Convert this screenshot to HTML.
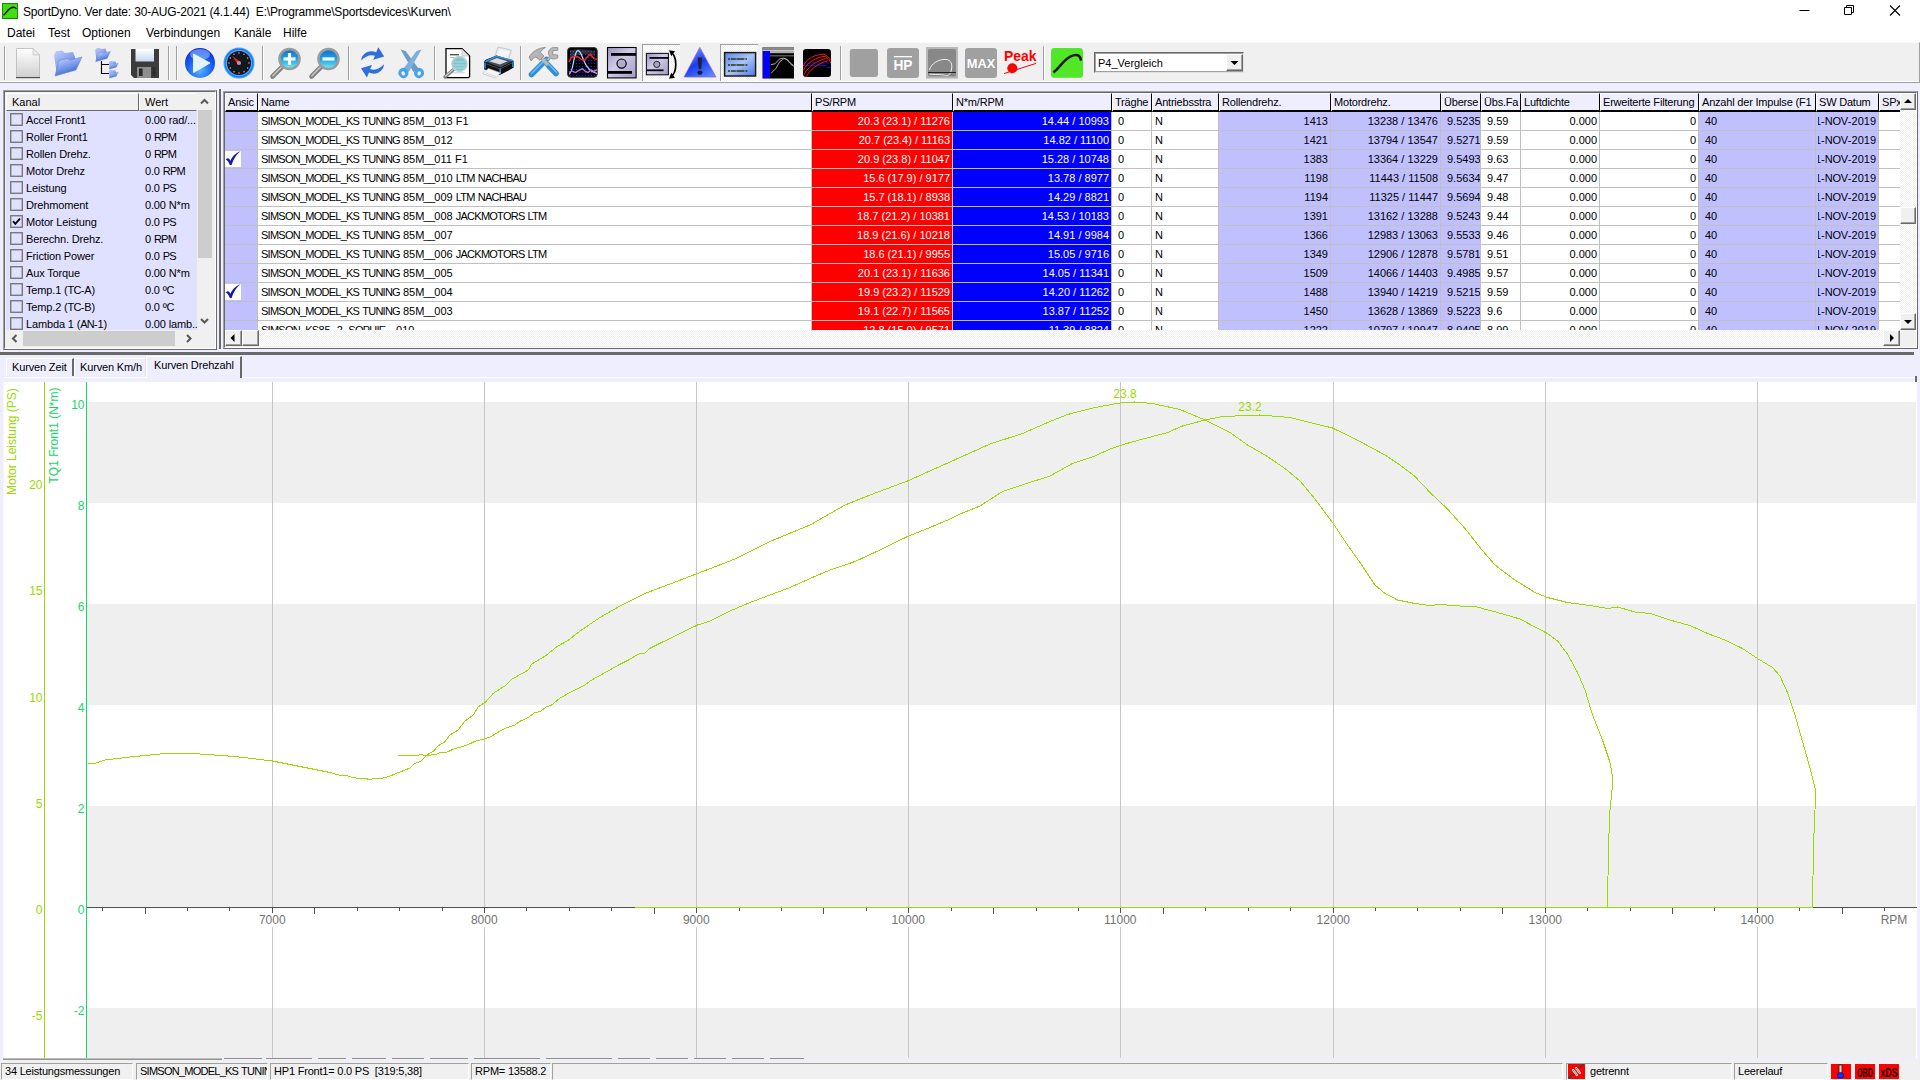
<!DOCTYPE html>
<html lang="de">
<head>
<meta charset="utf-8">
<title>SportDyno</title>
<style>.u{letter-spacing:-0.75px}

*{box-sizing:border-box;margin:0;padding:0}
html,body{width:1920px;height:1080px;overflow:hidden;background:#eeeeff;font-family:"Liberation Sans",sans-serif;font-size:11px;color:#000}
#title{position:absolute;left:0;top:0;width:1920px;height:22px;background:#fff}
#title .txt{position:absolute;left:23px;top:5px;font-size:12px;letter-spacing:-0.17px;white-space:pre;line-height:14px}
#menu{position:absolute;left:0;top:22px;width:1920px;height:20px;background:#fff;font-size:12px}
#menu span{position:absolute;top:4px;line-height:14px}
#toolbarbg{position:absolute;left:0;top:42px;width:1920px;height:41px;background:#f0f0f0;border-top:1px solid #fafafa;border-bottom:1px solid #a0a0a0;border-right:1px solid #a0a0a0;box-shadow:inset 0 -1px 0 #fff}
#vsplit{position:absolute;left:219px;top:89px;width:2px;height:260px;background:#696969}
#hsplit{position:absolute;left:0;top:352px;width:1914px;height:3px;background:#696969}
.tab{position:absolute;background:#eeeeff;border-left:1px solid #fff;border-top:1px solid #fff;border-right:2px solid #696969;white-space:nowrap;padding-left:5px;letter-spacing:-0.15px}
#tabline{position:absolute;left:4px;top:377px;width:1912px;height:1px;background:#fff}
#status{position:absolute;left:0;top:1060px;width:1920px;height:20px;background:#f0f0f0}
#status .p{position:absolute;top:3px;height:17px;border-top:1px solid #a0a0a0;border-left:1px solid #a0a0a0;border-right:1px solid #fff;border-bottom:1px solid #fff;line-height:15px;padding-left:3px;white-space:pre;overflow:hidden;letter-spacing:-0.2px}
#status .i{position:absolute;top:4px;height:15px;background:#f00}

#lp{position:absolute;left:3px;top:90px;width:214px;height:260px;border:1px solid #a0a0a0;border-right-color:#696969;border-bottom-color:#696969;background:#f0f0f0}
#lp .in{position:absolute;left:0;top:0;right:0;bottom:0;border:1px solid #696969;border-right-color:#fff;border-bottom-color:#fff}
#lp .body{position:absolute;left:1px;top:1px;width:207px;height:254px;overflow:hidden;background:#f0f0f0}
#lp .hd{position:absolute;top:0;height:18px;background:#f0f0f0;border-top:1px solid #fff;border-left:1px solid #fff;border-right:1px solid #696969;border-bottom:1px solid #696969;line-height:17px;padding-left:5px}
#lp .rows{position:absolute;left:0;top:18px;width:191px;height:219px;letter-spacing:-0.15px;background:#e0e0ff;overflow:hidden}
#lp .r{position:absolute;left:0;width:191px;height:17px;line-height:19px;white-space:nowrap}
#lp .cb{position:absolute;left:4px;top:2px;width:13px;height:13px;border:1px solid #7a7a7a;box-shadow:inset 0 0 0 .5px #8a8a8a}
#lp .n{position:absolute;left:20px;top:0}
#lp .v{position:absolute;left:139px;top:0}
#lp .vs{position:absolute;left:191px;top:0;width:15px;height:237px;background:#f0f0f0}
#lp .vs .th{position:absolute;left:1px;top:17px;width:14px;height:148px;background:#cdcdcd}
#lp .hs{position:absolute;left:0;top:237px;width:207px;height:17px;background:#f0f0f0}
#lp .hs .th{position:absolute;left:17px;top:1px;width:152px;height:15px;background:#cdcdcd}

.u2{letter-spacing:-0.25px}
#gr{position:absolute;left:223px;top:91px;width:1695px;height:258px;border:1px solid #a0a0a0;border-right-color:#696969;border-bottom-color:#696969;background:#f0f0f0}
#gr .in{position:absolute;left:0;top:0;right:0;bottom:0;border:1px solid #696969;border-right-color:#fff;border-bottom-color:#fff}
#gv{position:absolute;left:225px;top:93px;width:1675px;height:237px;overflow:hidden;background:#fff}
#gv .h{position:absolute;top:0;height:19px;background:#eeeeff;border-left:1px solid #fff;border-top:1px solid #fff;border-right:1px solid #000;border-bottom:2px solid #000;line-height:16px;padding-left:2px;white-space:nowrap;overflow:hidden;letter-spacing:-0.2px}
#gv .c{position:absolute;height:19px;border-right:1px solid #c0c0c0;border-bottom:1px solid #c0c0c0;line-height:18px;white-space:nowrap;overflow:hidden}
#gv .c.l{padding-left:3px}
#gv .c.r{text-align:right;padding-right:2px}
#gv .c .cl{position:absolute;left:2px;right:2px;top:0;bottom:0;overflow:hidden}
#gv .c span.d{position:absolute;right:0;top:0}
.ck{position:absolute;left:0;top:1px;width:16px;height:16px;background:#fff}

#gvs{position:absolute;left:1900px;top:93px;width:16px;height:237px;background:#f7f7f7;background-image:conic-gradient(#fff 25%,#f0f0f0 0 50%,#fff 0 75%,#f0f0f0 0);background-size:2px 2px}
#gvs .b,#ghs .b{position:absolute;background:#f0f0f0;border:1px solid #fff;border-right-color:#696969;border-bottom-color:#696969;box-shadow:inset -1px -1px 0 #a0a0a0}
#gvs .b{left:0;width:16px;height:17px}
#ghs{position:absolute;left:225px;top:330px;width:1675px;height:16px;background:#f7f7f7;background-image:conic-gradient(#fff 25%,#f0f0f0 0 50%,#fff 0 75%,#f0f0f0 0);background-size:2px 2px}
#ghs .b{top:0;width:17px;height:16px}
#ghs svg,#gvs svg{position:absolute;left:-1px;top:-1px}

#chart{position:absolute;left:0;top:0;width:1920px;height:1080px;pointer-events:none}
#chart text{font-family:"Liberation Sans",sans-serif;font-size:12px}

#tb{position:absolute;left:0;top:42px;width:1920px;height:41px}
#tb text{font-family:"Liberation Sans",sans-serif}
#combo{position:absolute;left:1094px;top:52px;width:150px;height:21px;border:1px solid #696969;border-right-color:#e3e3e3;border-bottom-color:#e3e3e3;background:#fff;box-shadow:0 0 0 1px #a0a0a0 inset}
#combo .t{position:absolute;left:3px;top:3px;font-size:11px;line-height:15px;white-space:nowrap}
#combo .b{position:absolute;left:131px;top:1px;width:17px;height:17px;background:#f0f0f0;border:1px solid #fff;border-right-color:#696969;border-bottom-color:#696969;box-shadow:inset -1px -1px 0 #a0a0a0}
.pressed{position:absolute;top:44px;height:37px;border-top:1px solid #a0a0a0;border-left:1px solid #a0a0a0;background-color:#f8f8f8;background-image:conic-gradient(#fff 25%,#f0f0f0 0 50%,#fff 0 75%,#f0f0f0 0);background-size:2px 2px}
</style>
</head>
<body>
<div id="title"><svg width="16" height="16" style="position:absolute;left:2px;top:3px" viewBox="0 0 16 15" preserveAspectRatio="none"><rect x="0.5" y="0.5" width="15" height="14" fill="#3ee010" stroke="#1a8a00"/><path d="M1.5 11.5 C5 9 6 4.5 11 4 C13 3.8 13.5 4.5 14.5 5.5" fill="none" stroke="#000" stroke-width="1.3"/></svg><span class="txt">SportDyno. Ver date: 30-AUG-2021 (4.1.44)  E:\Programme\Sportsdevices\Kurven\</span>
<svg width="140" height="22" style="position:absolute;left:1780px;top:0" viewBox="0 0 140 22"><path d="M19.5 10.5 H29.5" stroke="#000" stroke-width="1" fill="none"/><path d="M64.5 7.5 H71.5 V14.5 H64.5 Z M66.5 7.5 V5.5 H73.5 V12.5 H71.5" stroke="#000" stroke-width="1" fill="none"/><path d="M110 5.5 L120 15.5 M120 5.5 L110 15.5" stroke="#000" stroke-width="1.1" fill="none"/></svg>
</div>
<div id="menu"><span style="left:7px">Datei</span><span style="left:48px">Test</span><span style="left:82px">Optionen</span><span style="left:146px">Verbindungen</span><span style="left:234px">Kanäle</span><span style="left:283px">Hilfe</span></div>
<div id="toolbarbg"></div>
<div class="pressed" style="left:642px;width:38px"></div><div class="pressed" style="left:720px;width:38px"></div>
<svg id="tb" width="1920" height="41" viewBox="0 42 1920 41">
<defs>
<linearGradient id="gDoc" x1="0" y1="0" x2="0" y2="1"><stop offset="0" stop-color="#ffffff"/><stop offset="1" stop-color="#cfcfcf"/></linearGradient>
<linearGradient id="gFb" x1="0" y1="0" x2="0.6" y2="1"><stop offset="0" stop-color="#c2d2f8"/><stop offset="0.5" stop-color="#8ea8ec"/><stop offset="1" stop-color="#4a6cd6"/></linearGradient>
<linearGradient id="gFf" x1="0.2" y1="0" x2="0.7" y2="1"><stop offset="0" stop-color="#c6d6fa"/><stop offset="0.45" stop-color="#7f9fec"/><stop offset="1" stop-color="#2f55c8"/></linearGradient>
<radialGradient id="gPlay" cx="0.5" cy="0.75" r="0.75"><stop offset="0" stop-color="#56b4ff"/><stop offset="0.55" stop-color="#1a62f0"/><stop offset="1" stop-color="#0a2ad8"/></radialGradient>
<linearGradient id="gLens" x1="0" y1="0" x2="0" y2="1"><stop offset="0" stop-color="#0a6fd0"/><stop offset="0.55" stop-color="#1ea8e8"/><stop offset="1" stop-color="#7ff0f4"/></linearGradient>
<linearGradient id="gRoll" x1="0" y1="0" x2="1" y2="1"><stop offset="0" stop-color="#9a94c0"/><stop offset="0.45" stop-color="#d0cce8"/><stop offset="1" stop-color="#a09ac4"/></linearGradient>
<linearGradient id="gWarn" x1="0.2" y1="0" x2="0.8" y2="1"><stop offset="0" stop-color="#86a0ff"/><stop offset="0.5" stop-color="#1a3cf0"/><stop offset="1" stop-color="#5a86ff"/></linearGradient>
<linearGradient id="gPanel" x1="0" y1="0" x2="1" y2="1"><stop offset="0" stop-color="#5a8ae8"/><stop offset="0.5" stop-color="#a8c4f8"/><stop offset="1" stop-color="#4a7ae0"/></linearGradient>
<linearGradient id="gFl" x1="0" y1="0" x2="0" y2="1"><stop offset="0" stop-color="#ffffff"/><stop offset="1" stop-color="#c4d8ee"/></linearGradient>
<pattern id="pDots" width="3" height="3" patternUnits="userSpaceOnUse"><rect width="1" height="1" fill="#1a1aff"/></pattern>
</defs>
<rect x="4" y="46" width="1" height="34" fill="#a0a0a0"/><rect x="5" y="46" width="1" height="34" fill="#fff"/><rect x="168" y="46" width="1" height="34" fill="#a0a0a0"/><rect x="169" y="46" width="1" height="34" fill="#fff"/><rect x="176" y="46" width="1" height="34" fill="#a0a0a0"/><rect x="177" y="46" width="1" height="34" fill="#fff"/><rect x="262" y="46" width="1" height="34" fill="#a0a0a0"/><rect x="263" y="46" width="1" height="34" fill="#fff"/><rect x="348" y="46" width="1" height="34" fill="#a0a0a0"/><rect x="349" y="46" width="1" height="34" fill="#fff"/><rect x="434" y="46" width="1" height="34" fill="#a0a0a0"/><rect x="435" y="46" width="1" height="34" fill="#fff"/><rect x="520" y="46" width="1" height="34" fill="#a0a0a0"/><rect x="521" y="46" width="1" height="34" fill="#fff"/><rect x="840" y="46" width="1" height="34" fill="#a0a0a0"/><rect x="841" y="46" width="1" height="34" fill="#fff"/><rect x="1043" y="46" width="1" height="34" fill="#a0a0a0"/><rect x="1044" y="46" width="1" height="34" fill="#fff"/>
<path d="M16.5 48.5 H33 L39.5 55 V77.5 H16.5 Z" fill="url(#gDoc)" stroke="#b8b8b8" stroke-width="0.8"/><path d="M33 48.5 V55 H39.5 Z" fill="#ececec" stroke="#c0c0c0" stroke-width="0.7"/><rect x="16" y="77" width="24" height="1.2" fill="#505050"/>
<polygon points="54.0,55.0 56.0,51.2 62.0,50.5 65.0,53.0 73.0,52.0 75.0,57.0 75.0,60.0 57.0,75.0" fill="url(#gFb)"/><polygon points="55.0,76.0 59.0,60.5 67.0,58.5 70.0,60.0 82.0,57.0 76.0,70.0 55.0,76.0" fill="url(#gFf)" stroke="#5a7ad8" stroke-width="0.50"/>
<polygon points="95.0,50.2 96.2,48.2 99.5,47.8 101.1,49.1 105.5,48.6 106.6,51.4 106.6,53.0 96.7,61.2" fill="url(#gFb)"/><polygon points="95.6,61.8 97.8,53.3 102.2,52.2 103.8,53.0 110.5,51.4 107.2,58.5 95.6,61.8" fill="url(#gFf)" stroke="#5a7ad8" stroke-width="0.28"/>
<polygon points="108.8,62.2 109.5,60.9 111.6,60.7 112.6,61.5 115.3,61.2 116.0,62.9 116.0,63.9 109.9,69.0" fill="url(#gFb)"/><polygon points="109.2,69.3 110.5,64.1 113.3,63.4 114.3,63.9 118.4,62.9 116.3,67.3 109.2,69.3" fill="url(#gFf)" stroke="#5a7ad8" stroke-width="0.17"/>
<polygon points="108.8,71.2 109.5,69.9 111.6,69.7 112.6,70.5 115.3,70.2 116.0,71.9 116.0,72.9 109.9,78.0" fill="url(#gFb)"/><polygon points="109.2,78.3 110.5,73.1 113.3,72.4 114.3,72.9 118.4,71.9 116.3,76.3 109.2,78.3" fill="url(#gFf)" stroke="#5a7ad8" stroke-width="0.17"/>
<path d="M101.5 61 V73.5 H109 M101.5 64.5 H109" fill="none" stroke="#000" stroke-width="1.1"/>
<path d="M131 49 H159 V78 H134 L131 75 Z" fill="#3c3c3c"/><rect x="135.5" y="49" width="18.5" height="12.5" fill="url(#gFl)"/><rect x="137" y="67" width="14" height="11" fill="#8e8e8e"/><rect x="139" y="68.5" width="3.6" height="7.5" fill="#2a2a2a"/><rect x="152.5" y="67" width="3" height="9" fill="#2c2c2c"/>
<circle cx="200" cy="63" r="15" fill="url(#gPlay)"/><ellipse cx="200" cy="54.5" rx="10" ry="5.5" fill="#9cc8ff" opacity=".55"/><path d="M193.5 54 L210 63 L193.5 72.5 Z" fill="#e4f2ff" stroke="#fff" stroke-width=".8" stroke-linejoin="round"/>
<circle cx="239" cy="63" r="15.5" fill="#48a8ff"/><circle cx="239" cy="63" r="13.8" fill="none" stroke="#1a7af0" stroke-width="1.2"/><circle cx="239" cy="63" r="12" fill="#16161f"/>
<circle cx="249.0" cy="63.0" r=".7" fill="#c8c8d0"/>
<circle cx="247.7" cy="68.0" r=".7" fill="#c8c8d0"/>
<circle cx="244.0" cy="71.7" r=".7" fill="#c8c8d0"/>
<circle cx="239.0" cy="73.0" r=".7" fill="#c8c8d0"/>
<circle cx="234.0" cy="71.7" r=".7" fill="#c8c8d0"/>
<circle cx="230.3" cy="68.0" r=".7" fill="#c8c8d0"/>
<circle cx="229.0" cy="63.0" r=".7" fill="#c8c8d0"/>
<circle cx="230.3" cy="58.0" r=".7" fill="#c8c8d0"/>
<circle cx="234.0" cy="54.3" r=".7" fill="#c8c8d0"/>
<circle cx="239.0" cy="53.0" r=".7" fill="#c8c8d0"/>
<circle cx="244.0" cy="54.3" r=".7" fill="#c8c8d0"/>
<circle cx="247.7" cy="58.0" r=".7" fill="#c8c8d0"/>
<path d="M232 55.8 L240.2 61.8 L237.8 64.2 Z" fill="#ff2020"/><circle cx="239" cy="63" r="2.1" fill="#a0a0a8"/>
<path d="M282.0 67 L272.5 76.5" stroke="#808080" stroke-width="4.6" stroke-linecap="round"/><path d="M281.5 67 L272.9 75.8" stroke="#c4c4c4" stroke-width="1.6" stroke-linecap="round"/>
<circle cx="289.5" cy="59" r="10" fill="url(#gLens)" stroke="#9c9c9c" stroke-width="2.6"/>
<rect x="283.5" y="57.4" width="12" height="3.2" fill="#fff"/>
<rect x="287.9" y="53" width="3.2" height="12" fill="#fff"/>
<path d="M321.0 67 L311.5 76.5" stroke="#808080" stroke-width="4.6" stroke-linecap="round"/><path d="M320.5 67 L311.9 75.8" stroke="#c4c4c4" stroke-width="1.6" stroke-linecap="round"/>
<circle cx="328.5" cy="59" r="10" fill="url(#gLens)" stroke="#9c9c9c" stroke-width="2.6"/>
<rect x="322.5" y="57.4" width="12" height="3.2" fill="#fff"/>
<path d="M361.2 60.5 C361.5 53.5 369 49 376.2 52.2 L378.3 47.2 L384.2 56.6 L373.2 59.8 L375 55.8 C370.5 54 365.5 56 361.2 60.5 Z" fill="#2f6de0"/><path d="M361.2 60.5 C361.5 53.5 369 49 376.2 52.2 L378.3 47.2 L384.2 56.6 L373.2 59.8 L375 55.8 C370.5 54 365.5 56 361.2 60.5 Z" fill="#2f6de0" transform="rotate(180 372.6 62.4)"/>
<path d="M400.6 49.6 L405.6 51 L418.6 68.6 L413.4 72 L409 64 Z" fill="#6c9ccc"/><path d="M421.6 49.6 L416.6 51 L403.6 68.6 L408.8 72 L413.2 64 Z" fill="#7eaedc"/>
<ellipse cx="403.4" cy="73" rx="5" ry="5.2" fill="#4aa2ea" transform="rotate(-28 403.4 73)"/><ellipse cx="403.2" cy="73.4" rx="1.7" ry="2.2" fill="#f0f0f0" transform="rotate(-28 403.2 73.4)"/><ellipse cx="419" cy="73" rx="5" ry="5.2" fill="#4aa2ea" transform="rotate(28 419 73)"/><ellipse cx="419.2" cy="73.4" rx="1.7" ry="2.2" fill="#f0f0f0" transform="rotate(28 419.2 73.4)"/>
<path d="M446 48.6 H462 L469.6 56 V76.5 L468.5 77.6 H446 Z" fill="#fff" stroke="#000" stroke-width="1.3"/><path d="M462 49 V56 H469" fill="#e6e6e6" stroke="#b0b0b0" stroke-width=".6"/><rect x="450" y="54" width="9" height="1.4" fill="#505050"/><rect x="450" y="57" width="9" height=".8" fill="#b0b0b0"/><rect x="452" y="72.5" width="13" height=".8" fill="#c0c0c0"/>
<path d="M453.5 69.5 L445 77" stroke="#7c7c7c" stroke-width="3.4" stroke-linecap="round"/><path d="M453 69.6 L445.6 76" stroke="#d0d0d0" stroke-width="1.2" stroke-linecap="round"/><circle cx="459.5" cy="64" r="7.4" fill="#7cc6cc" stroke="#c0ccd4" stroke-width="1.8"/><path d="M453.5 62 H465.5 M453 65 H466 M454 68 H465" stroke="#a8dce0" stroke-width="1" fill="none"/>
<polygon points="498,47 511.4,50 508,61.6 494,58.4" fill="#e6e8ec" stroke="#aab2ba" stroke-width=".6"/><polygon points="499.4,49 509.6,51.4 507,60 496.4,57.4" fill="#f6f7f9"/>
<path d="M484 62.4 C484 60.6 485 60 487 59.2 L496.4 55.4 L512 60 C513.4 60.6 513.8 61.2 513.8 62.4 L513.8 67.6 L500 75 L484 69.2 Z" fill="#101012"/>
<polygon points="485,61.6 496.6,56.6 512.6,61 500.4,67.6" fill="#4a4c52"/><polygon points="489,61.2 496.8,58 507.6,61.2 500,64.6" fill="#d8dade"/>
<path d="M484.4 62 L496.6 56.2 L513.2 60.8" fill="none" stroke="#2c92f2" stroke-width="1.5"/><path d="M485 63 V68.6 M500.2 68.6 V74.4 M513 62 V67" stroke="#2c92f2" stroke-width="1.5" fill="none"/><path d="M485 63.4 L500.2 69 L513 62.2" fill="none" stroke="#6a6c72" stroke-width=".7"/>
<polygon points="488.4,68.4 500.4,72.8 495.4,78 482.6,73.6" fill="#f6f6f6" stroke="#b4b4b4" stroke-width=".6"/><path d="M486 73 L496 76.4" stroke="#d0d0d0" stroke-width=".8"/>
<path d="M531.5 74.5 L546.5 59.5" stroke="#2f8ed8" stroke-width="5.6" stroke-linecap="round"/><path d="M531.5 73.5 L546 59" stroke="#6cbcf4" stroke-width="1.6" stroke-linecap="round"/>
<path d="M556 73.5 L548 65" stroke="#2f8ed8" stroke-width="5.6" stroke-linecap="round"/><path d="M556.6 72.4 L549 64.4" stroke="#6cbcf4" stroke-width="1.5" stroke-linecap="round"/><path d="M548 65 L541 57.5" stroke="#b8b8b8" stroke-width="3.4"/>
<path d="M529.2 57 C532 52 537 48 545.5 47.4 C543 49 541 50.5 540.4 52.4 L544 56 L540 60.4 L536 57 C534 57.6 532 59.4 531 61 Z" fill="#b4b4b4" stroke="#7c7c7c" stroke-width=".7"/>
<path d="M546.5 59.5 L549.5 56.2 C547 52.4 549 48.4 553.4 47.4 L557.8 47.6 L557.8 50.4 L553 50.6 L552.6 54.6 L557.8 55 L557.8 57.8 C555 59.4 552.4 59.4 550.6 58 L548.4 61 Z" fill="#b8b8b8" stroke="#808080" stroke-width=".7"/>
<rect x="567.6" y="47.6" width="29.6" height="29.6" rx="3.2" fill="#000" stroke="#3a3a3a" stroke-width="1"/><rect x="569" y="49" width="27" height="27" fill="url(#pDots)"/><path d="M570 50 Q582 48 595 51 L595 56 Q582 52 570 58 Z" fill="#fff" opacity=".18"/>
<path d="M569 74 C573.5 74 573.5 50.5 578 50.5 C582.6 50.5 583 71 597 73.4" fill="none" stroke="#a6d4ff" stroke-width="1.3"/><path d="M569 62 L571 57.6 L574 56.4 L578 57 L581 59.4 L584.5 60.2 L588 56.2 L590.4 54.6 L594 58.6 L597 59.4" fill="none" stroke="#ff2020" stroke-width="1.5"/><path d="M569 72.4 L572 71 L575.5 72.6 L579 70.4 L582.4 68.6 L585.4 71.4 L588 72.4 L591 70 L594 71.4 L597 69.6" fill="none" stroke="#d070e0" stroke-width="1.3"/>
<rect x="607.5" y="47.5" width="28.6" height="30.4" fill="url(#gRoll)" stroke="#000" stroke-width="1.1"/><rect x="611" y="53" width="25" height="2.8" fill="#000"/><rect x="607.5" y="71" width="24.5" height="2.8" fill="#000"/><circle cx="621.6" cy="63.6" r="4.6" fill="#b4aecc" stroke="#000" stroke-width="1.2"/>
<rect x="646.4" y="53.4" width="22" height="21.4" fill="url(#gRoll)" stroke="#16161e" stroke-width="1.1"/><rect x="649.5" y="57" width="19" height="1.8" fill="#000"/><rect x="646.5" y="69.4" width="17" height="1.8" fill="#000"/><circle cx="656.8" cy="64.4" r="3.1" fill="#aaa4c4" stroke="#26262e" stroke-width="1"/>
<path d="M671 52.4 C677.4 56 677.4 72.6 671 76.6" fill="none" stroke="#000" stroke-width="1.7"/><path d="M669 50.2 L675 51.2 L671.2 56.2 Z M669 78.8 L675 77.8 L671.2 72.8 Z" fill="#000"/>
<path d="M699.8 47.4 L716 77 H684 Z" fill="url(#gWarn)" stroke="#8868e0" stroke-width=".8" stroke-linejoin="round"/><path d="M697.6 57.4 H702.2 L701.2 69 H698.6 Z" fill="#20203c"/><ellipse cx="699.9" cy="72.6" rx="2.6" ry="2.2" fill="#1a1a38"/>
<rect x="724.6" y="52.6" width="31" height="23.4" fill="url(#gPanel)" stroke="#1c1c12" stroke-width="1.5"/><path d="M728 59 H747 M728 65 H748 M728 71 H748" stroke="#33331c" stroke-width="1.5" stroke-dasharray="2 .8 5 .6 8 1" fill="none"/>
<rect x="762.5" y="47.5" width="31.5" height="31" fill="#000"/><rect x="762.5" y="47.5" width="31.5" height="2" fill="#8c8c8c"/><rect x="762.5" y="49.5" width="31.5" height="1.6" fill="#c8c8c8"/><rect x="770" y="51" width="24" height="2.2" fill="#b0b0b0"/><rect x="770" y="55.4" width="24" height=".9" fill="#8c8c8c"/><rect x="763" y="51" width="7" height="27" fill="#0000ff"/>
<path d="M771 64.6 L775 63.8 L779.4 59 L783.4 58 L786.4 59 L790 63.4 L793.6 66.6 M771 73.4 L775.6 68.8 L780 61.4 L784 58.6 L787.4 59.6 L790.4 63 L793.6 65.6" fill="none" stroke="#b8b8b8" stroke-width=".9"/>
<rect x="803" y="49" width="28" height="28" rx="3.2" fill="#000"/><path d="M803 63 H831" stroke="#1414ff" stroke-width=".9" stroke-dasharray="3 1.5" fill="none"/><path d="M803.4 65.6 H826 M827 67.4 H831" stroke="#1414ff" stroke-width=".9" fill="none"/>
<path d="M803.4 66 C806 58.6 815 54.4 824 54.2 C827 55.4 829 58 830.8 60.4 M803.4 70.4 C807 62.6 816 57.4 825 56.2 C828 58 829.6 60.4 830.8 63 M804 74.6 C808 66.6 817 60.4 826.4 58.4 M806 77 C810 69.4 818 63.4 828 60.6" fill="none" stroke="#ff1414" stroke-width="1"/>
<rect x="849.8" y="49" width="28.2" height="28" rx="2.4" fill="#a0a0a0"/>
<rect x="887" y="48" width="32" height="30" rx="3" fill="#a0a0a0"/><text x="903" y="70" text-anchor="middle" font-size="14" font-weight="bold" fill="#fff" textLength="19" lengthAdjust="spacingAndGlyphs">HP</text><rect x="894" y="56" width="18" height="1.3" fill="#fff"/>
<rect x="926" y="47" width="32" height="31.6" fill="#b8b8b8"/><rect x="928" y="49" width="28" height="27.6" rx="1.5" fill="#888"/><path d="M929.4 70 C931 64 938 59 946 59.4 C951 60 952.6 64 951.4 70 C950.6 74 948.6 76 945.6 75.6 C943 74.4 938 74.6 929.6 74.2" fill="none" stroke="#f0f0f0" stroke-width="1"/><rect x="928" y="72" width="28" height="1" fill="#202020"/>
<rect x="965" y="48" width="32" height="30" rx="3" fill="#a0a0a0"/><text x="981" y="68.4" text-anchor="middle" font-size="13.5" font-weight="bold" fill="#fff" textLength="28.5" lengthAdjust="spacingAndGlyphs">MAX</text>
<text x="1004" y="60.6" font-size="14" font-weight="bold" fill="#ff0000" textLength="32.4" lengthAdjust="spacingAndGlyphs">Peak</text><path d="M1004 73.6 L1036 63.4" stroke="#ff0000" stroke-width="1" fill="none"/><circle cx="1012.3" cy="68.2" r="5" fill="#ff0000"/>
<rect x="1051" y="48" width="32" height="29.8" rx="3.4" fill="#52e628"/><path d="M1053.4 72.4 C1060 68 1064 58 1073 55.4 C1078 54 1080.4 55.6 1081 60.6" fill="none" stroke="#1a1a1a" stroke-width="2.5"/>
</svg>
<div id="combo"><span class="t">P4_Vergleich</span><div class="b"><svg width="15" height="15" style="position:absolute;left:0;top:0"><path d="M3.5 6 L11.5 6 L7.5 10 Z" fill="#000"/></svg></div></div>
<svg id="chart" width="1920" height="1080" viewBox="0 0 1920 1080">
<rect x="3" y="382" width="1" height="676" fill="#f6f6ff"/>
<rect x="4" y="382" width="1913" height="676" fill="#fff"/>
<rect x="87" y="402" width="1829" height="101" fill="#efefef"/>
<rect x="87" y="604" width="1829" height="101" fill="#efefef"/>
<rect x="87" y="806" width="1829" height="101" fill="#efefef"/>
<rect x="87" y="1008" width="1829" height="50" fill="#efefef"/>
<rect x="272" y="382" width="1" height="676" fill="#c6c6c6"/>
<rect x="256" y="913" width="33" height="14" fill="#fff"/>
<rect x="484" y="382" width="1" height="676" fill="#c6c6c6"/>
<rect x="468" y="913" width="33" height="14" fill="#fff"/>
<rect x="696" y="382" width="1" height="676" fill="#c6c6c6"/>
<rect x="680" y="913" width="33" height="14" fill="#fff"/>
<rect x="908" y="382" width="1" height="676" fill="#c6c6c6"/>
<rect x="892" y="913" width="33" height="14" fill="#fff"/>
<rect x="1120" y="382" width="1" height="676" fill="#c6c6c6"/>
<rect x="1104" y="913" width="33" height="14" fill="#fff"/>
<rect x="1333" y="382" width="1" height="676" fill="#c6c6c6"/>
<rect x="1317" y="913" width="33" height="14" fill="#fff"/>
<rect x="1545" y="382" width="1" height="676" fill="#c6c6c6"/>
<rect x="1529" y="913" width="33" height="14" fill="#fff"/>
<rect x="1757" y="382" width="1" height="676" fill="#c6c6c6"/>
<rect x="1741" y="913" width="33" height="14" fill="#fff"/>
<rect x="87" y="907" width="1830" height="1" fill="#505050"/>
<rect x="102" y="908" width="1" height="3" fill="#505050"/>
<rect x="145" y="908" width="1" height="6" fill="#505050"/>
<rect x="187" y="908" width="1" height="3" fill="#505050"/>
<rect x="229" y="908" width="1" height="3" fill="#505050"/>
<rect x="272" y="908" width="1" height="5" fill="#505050"/>
<rect x="314" y="908" width="1" height="6" fill="#505050"/>
<rect x="357" y="908" width="1" height="3" fill="#505050"/>
<rect x="399" y="908" width="1" height="3" fill="#505050"/>
<rect x="442" y="908" width="1" height="3" fill="#505050"/>
<rect x="484" y="908" width="1" height="5" fill="#505050"/>
<rect x="526" y="908" width="1" height="3" fill="#505050"/>
<rect x="569" y="908" width="1" height="3" fill="#505050"/>
<rect x="611" y="908" width="1" height="3" fill="#505050"/>
<rect x="654" y="908" width="1" height="6" fill="#505050"/>
<rect x="696" y="908" width="1" height="5" fill="#505050"/>
<rect x="739" y="908" width="1" height="3" fill="#505050"/>
<rect x="781" y="908" width="1" height="3" fill="#505050"/>
<rect x="823" y="908" width="1" height="6" fill="#505050"/>
<rect x="866" y="908" width="1" height="3" fill="#505050"/>
<rect x="908" y="908" width="1" height="5" fill="#505050"/>
<rect x="951" y="908" width="1" height="3" fill="#505050"/>
<rect x="993" y="908" width="1" height="6" fill="#505050"/>
<rect x="1036" y="908" width="1" height="3" fill="#505050"/>
<rect x="1078" y="908" width="1" height="3" fill="#505050"/>
<rect x="1120" y="908" width="1" height="5" fill="#505050"/>
<rect x="1163" y="908" width="1" height="6" fill="#505050"/>
<rect x="1205" y="908" width="1" height="3" fill="#505050"/>
<rect x="1248" y="908" width="1" height="3" fill="#505050"/>
<rect x="1290" y="908" width="1" height="3" fill="#505050"/>
<rect x="1333" y="908" width="1" height="5" fill="#505050"/>
<rect x="1375" y="908" width="1" height="3" fill="#505050"/>
<rect x="1417" y="908" width="1" height="3" fill="#505050"/>
<rect x="1460" y="908" width="1" height="3" fill="#505050"/>
<rect x="1502" y="908" width="1" height="6" fill="#505050"/>
<rect x="1545" y="908" width="1" height="5" fill="#505050"/>
<rect x="1587" y="908" width="1" height="3" fill="#505050"/>
<rect x="1630" y="908" width="1" height="3" fill="#505050"/>
<rect x="1672" y="908" width="1" height="6" fill="#505050"/>
<rect x="1714" y="908" width="1" height="3" fill="#505050"/>
<rect x="1757" y="908" width="1" height="5" fill="#505050"/>
<rect x="1799" y="908" width="1" height="3" fill="#505050"/>
<rect x="1842" y="908" width="1" height="6" fill="#505050"/>
<rect x="1884" y="908" width="1" height="3" fill="#505050"/>
<text x="272.3" y="924" text-anchor="middle" fill="#727272">7000</text>
<text x="484.3" y="924" text-anchor="middle" fill="#727272">8000</text>
<text x="696.3" y="924" text-anchor="middle" fill="#727272">9000</text>
<text x="908.3" y="924" text-anchor="middle" fill="#727272">10000</text>
<text x="1120.3" y="924" text-anchor="middle" fill="#727272">11000</text>
<text x="1333.3" y="924" text-anchor="middle" fill="#727272">12000</text>
<text x="1545.3" y="924" text-anchor="middle" fill="#727272">13000</text>
<text x="1757.3" y="924" text-anchor="middle" fill="#727272">14000</text>
<text x="1894" y="924" text-anchor="middle" fill="#727272">RPM</text>
<rect x="44" y="382" width="1" height="676" fill="#9bd900"/>
<rect x="86" y="382" width="1" height="676" fill="#18d664"/>
<text x="42.5" y="489.4" text-anchor="end" fill="#9bd900">20</text>
<text x="42.5" y="595.4" text-anchor="end" fill="#9bd900">15</text>
<text x="42.5" y="702.4" text-anchor="end" fill="#9bd900">10</text>
<text x="42.5" y="808.4" text-anchor="end" fill="#9bd900">5</text>
<text x="42.5" y="914.4" text-anchor="end" fill="#9bd900">0</text>
<text x="42.5" y="1020.4" text-anchor="end" fill="#9bd900">-5</text>
<text x="84.5" y="409.0" text-anchor="end" fill="#18d664">10</text>
<text x="84.5" y="510.0" text-anchor="end" fill="#18d664">8</text>
<text x="84.5" y="611.0" text-anchor="end" fill="#18d664">6</text>
<text x="84.5" y="712.0" text-anchor="end" fill="#18d664">4</text>
<text x="84.5" y="813.0" text-anchor="end" fill="#18d664">2</text>
<text x="84.5" y="914.0" text-anchor="end" fill="#18d664">0</text>
<text x="84.5" y="1015.0" text-anchor="end" fill="#18d664">-2</text>
<text transform="translate(16,495) rotate(-90)" fill="#9bd900">Motor Leistung (PS)</text>
<text transform="translate(57.5,483.5) rotate(-90)" fill="#18d664">TQ1 Front1 (N*m)</text>
<path d="M88.5 763.5 L95.0 763.3 L105.0 760.0 L130.0 757.0 L160.0 754.0 L180.0 753.0 L200.0 754.0 L235.0 756.5 L272.5 761.0 L300.0 766.5 L330.0 772.5 L340.0 775.3 L347.5 775.8 L351.7 777.3 L358.3 778.3 L370.0 779.2 L381.7 778.3 L388.3 776.7 L396.7 773.3 L410.0 768.0 L415.0 763.3 L420.8 761.3 L426.7 755.0 L433.3 751.3 L438.3 745.8 L445.0 741.7 L450.0 735.0 L458.3 730.0 L464.2 721.7 L473.3 715.0 L478.3 706.7 L485.0 702.5 L493.3 693.3 L505.0 685.8 L511.7 679.2 L528.3 670.0 L531.7 664.2 L546.7 655.0 L556.7 646.7 L567.5 640.8 L580.0 631.0 L600.0 617.5 L620.0 606.0 L645.0 593.5 L670.0 584.0 L697.5 573.5 L735.0 559.0 L770.0 541.5 L810.0 525.0 L845.0 505.0 L870.0 495.0 L907.5 481.0 L960.0 457.5 L990.0 444.0 L1022.5 433.5 L1050.0 421.5 L1067.5 414.5 L1095.0 407.5 L1120.0 403.0 L1135.0 402.0 L1152.5 403.5 L1180.0 409.5 L1205.0 420.0 L1230.0 432.5 L1247.5 445.0 L1265.0 455.0 L1285.0 468.5 L1300.0 481.0 L1315.0 499.0 L1332.5 522.5 L1347.5 545.0 L1360.0 562.5 L1375.0 585.0 L1385.0 593.5 L1397.5 600.0 L1415.0 603.5 L1430.0 605.5 L1440.0 604.5 L1460.0 606.0 L1475.0 606.5 L1497.5 612.5 L1520.0 619.0 L1535.0 627.0 L1547.5 633.5 L1557.5 641.0 L1567.5 654.0 L1577.5 672.5 L1585.0 690.0 L1592.5 715.0 L1602.5 740.0 L1610.0 762.5 L1613.0 780.0 L1610.0 810.0 L1608.5 845.0 L1607.5 907.5 L635.0 907.5" fill="none" stroke="#9bd900" stroke-width="1" stroke-linejoin="round" shape-rendering="crispEdges"/>
<path d="M398.0 755.5 L417.5 755.5 L420.0 754.5 L426.7 755.5 L435.8 754.4 L440.0 752.7 L446.7 752.3 L453.3 749.2 L466.7 745.3 L475.0 741.3 L485.0 738.7 L490.0 737.0 L505.0 728.3 L515.0 725.0 L520.0 721.2 L528.3 717.5 L535.0 712.5 L540.0 711.7 L546.7 706.7 L551.7 705.0 L560.0 698.0 L573.3 690.8 L585.0 685.0 L591.7 680.0 L606.7 671.7 L620.0 664.2 L630.0 659.2 L638.3 654.2 L645.0 653.0 L650.0 648.3 L660.0 643.3 L680.0 633.5 L697.5 625.0 L710.0 621.0 L730.0 611.0 L750.0 602.5 L770.0 595.0 L790.0 587.5 L810.0 578.5 L830.0 570.0 L855.0 561.5 L880.0 550.0 L907.5 536.5 L930.0 527.5 L950.0 519.0 L960.0 514.0 L980.0 506.0 L1002.5 491.5 L1025.0 484.0 L1050.0 476.0 L1072.5 463.5 L1095.0 456.0 L1110.0 449.0 L1130.0 442.5 L1167.5 432.5 L1182.5 426.0 L1205.0 420.0 L1222.5 416.5 L1260.0 415.0 L1290.0 417.5 L1310.0 422.5 L1332.5 428.0 L1360.0 441.5 L1385.0 455.0 L1400.0 465.0 L1415.0 476.5 L1430.0 492.5 L1447.5 509.0 L1465.0 528.5 L1480.0 547.5 L1495.0 565.0 L1515.0 580.0 L1535.0 592.5 L1547.5 597.5 L1567.5 602.5 L1590.0 605.5 L1607.5 608.5 L1617.5 607.0 L1635.0 612.0 L1650.0 613.5 L1675.0 621.5 L1690.0 625.5 L1707.5 633.5 L1725.0 640.0 L1742.5 648.5 L1757.5 658.5 L1772.5 667.5 L1780.0 676.0 L1787.5 692.5 L1795.0 715.0 L1805.0 750.0 L1812.5 777.5 L1815.5 790.0 L1815.0 810.0 L1813.5 845.0 L1812.5 907.5 L1100.0 907.5" fill="none" stroke="#9bd900" stroke-width="1" stroke-linejoin="round" shape-rendering="crispEdges"/>
<rect x="1134" y="401" width="1" height="1" fill="#9bd900"/><rect x="1259" y="414" width="1" height="1" fill="#9bd900"/>
<text x="1125" y="398" text-anchor="middle" fill="#9bd900">23.8</text>
<text x="1250" y="411" text-anchor="middle" fill="#9bd900">23.2</text>
</svg>
<div id="lp"><div class="in"><div class="body">
<div class="hd" style="left:0;width:133px">Kanal</div>
<div class="hd" style="left:133px;width:58px;border-right-color:#f0f0f0">Wert</div>
<div class="rows">
<div class="r" style="top:0px"><span class="cb"></span><span class="n">Accel Front1</span><span class="v">0.00 rad/...</span></div>
<div class="r" style="top:17px"><span class="cb"></span><span class="n">Roller Front1</span><span class="v">0 <span class="u">RPM</span></span></div>
<div class="r" style="top:34px"><span class="cb"></span><span class="n">Rollen Drehz.</span><span class="v">0 <span class="u">RPM</span></span></div>
<div class="r" style="top:51px"><span class="cb"></span><span class="n">Motor Drehz</span><span class="v">0.0 <span class="u">RPM</span></span></div>
<div class="r" style="top:68px"><span class="cb"></span><span class="n">Leistung</span><span class="v">0.0 <span class="u">PS</span></span></div>
<div class="r" style="top:85px"><span class="cb"></span><span class="n">Drehmoment</span><span class="v">0.00 N*m</span></div>
<div class="r" style="top:102px"><span class="cb"><svg width="11" height="11" viewBox="0 0 11 11" style="position:absolute;left:0;top:0"><path d="M2 5.2 L4.3 7.8 L9 2.6" fill="none" stroke="#000" stroke-width="1.9"/></svg></span><span class="n">Motor Leistung</span><span class="v">0.0 <span class="u">PS</span></span></div>
<div class="r" style="top:119px"><span class="cb"></span><span class="n">Berechn. Drehz.</span><span class="v">0 <span class="u">RPM</span></span></div>
<div class="r" style="top:136px"><span class="cb"></span><span class="n">Friction Power</span><span class="v">0.0 <span class="u">PS</span></span></div>
<div class="r" style="top:153px"><span class="cb"></span><span class="n">Aux Torque</span><span class="v">0.00 N*m</span></div>
<div class="r" style="top:170px"><span class="cb"></span><span class="n">Temp.1 (<span class="u">TC</span>-A)</span><span class="v">0.0 ºC</span></div>
<div class="r" style="top:187px"><span class="cb"></span><span class="n">Temp.2 (<span class="u">TC</span>-B)</span><span class="v">0.0 ºC</span></div>
<div class="r" style="top:204px"><span class="cb"></span><span class="n">Lambda 1 (<span class="u">AN</span>-1)</span><span class="v">0.00 lamb..</span></div>
</div>
<div class="vs"><div class="th"></div><svg width="15" height="17" style="position:absolute;left:0;top:0"><path d="M4 10.5 L7.5 7 L11 10.5" fill="none" stroke="#5a5a5a" stroke-width="2.1"/></svg><svg width="15" height="17" style="position:absolute;left:0;top:220px"><path d="M4 6 L7.5 9.5 L11 6" fill="none" stroke="#5a5a5a" stroke-width="2.1"/></svg></div>
<div class="hs"><div class="th"></div><svg width="17" height="17" style="position:absolute;left:0;top:0"><path d="M10.5 5 L7 8.5 L10.5 12" fill="none" stroke="#5a5a5a" stroke-width="2.1"/></svg><svg width="17" height="17" style="position:absolute;left:174px;top:0"><path d="M7 5 L10.5 8.5 L7 12" fill="none" stroke="#5a5a5a" stroke-width="2.1"/></svg></div>
</div></div></div>
<div id="gr"><div class="in"></div></div>
<div id="gv">
<div class="h" style="left:0px;width:33px">Ansic</div>
<div class="h" style="left:33px;width:554px">Name</div>
<div class="h" style="left:587px;width:141px">PS/RPM</div>
<div class="h" style="left:728px;width:159px">N*m/RPM</div>
<div class="h" style="left:887px;width:40px">Träghe</div>
<div class="h" style="left:927px;width:67px">Antriebsstra</div>
<div class="h" style="left:994px;width:112px">Rollendrehz.</div>
<div class="h" style="left:1106px;width:110px">Motordrehz.</div>
<div class="h" style="left:1216px;width:40px">Überse</div>
<div class="h" style="left:1256px;width:40px">Übs.Fa</div>
<div class="h" style="left:1296px;width:79px">Luftdichte</div>
<div class="h" style="left:1375px;width:99px">Erweiterte Filterung</div>
<div class="h" style="left:1474px;width:117px">Anzahl der Impulse (F1</div>
<div class="h" style="left:1591px;width:63px">SW Datum</div>
<div class="h" style="left:1654px;width:60px">SPx</div>
<div class="c" style="left:0px;top:19px;width:33px;background:#c0c0ff;color:#000"></div>
<div class="c l" style="left:33px;top:19px;width:554px;background:#fff;color:#000"><span class="u">SIMSON_MODEL_KS</span> <span class="u">TUNING</span> 85<span class="u">M__</span>013 F1</div>
<div class="c r" style="left:587px;top:19px;width:141px;background:#ff0000;color:#fff">20.3 (23.1) / 11276</div>
<div class="c r" style="left:728px;top:19px;width:159px;background:#0000ff;color:#fff">14.44 / 10993</div>
<div class="c l" style="left:887px;top:19px;width:40px;background:#fff;color:#000;padding-left:6px">0</div>
<div class="c l" style="left:927px;top:19px;width:67px;background:#fff;color:#000">N</div>
<div class="c r" style="left:994px;top:19px;width:112px;background:#c0c0ff;color:#000">1413</div>
<div class="c r" style="left:1106px;top:19px;width:110px;background:#c0c0ff;color:#000">13238 / 13476</div>
<div class="c l" style="left:1216px;top:19px;width:40px;background:#c0c0ff;color:#000;padding-left:6px">9.5235</div>
<div class="c l" style="left:1256px;top:19px;width:40px;background:#fff;color:#000;padding-left:6px">9.59</div>
<div class="c r" style="left:1296px;top:19px;width:79px;background:#fff;color:#000">0.000</div>
<div class="c r" style="left:1375px;top:19px;width:99px;background:#fff;color:#000">0</div>
<div class="c l" style="left:1474px;top:19px;width:117px;background:#c0c0ff;color:#000;padding-left:6px">40</div>
<div class="c" style="left:1591px;top:19px;width:63px;background:#c0c0ff;color:#000"><div class="cl"><span class="d">21-<span class="u2">NOV</span>-2019</span></div></div>
<div class="c l" style="left:1654px;top:19px;width:22px;background:#fff;color:#000"></div>
<div class="c" style="left:0px;top:38px;width:33px;background:#c0c0ff;color:#000"></div>
<div class="c l" style="left:33px;top:38px;width:554px;background:#fff;color:#000"><span class="u">SIMSON_MODEL_KS</span> <span class="u">TUNING</span> 85<span class="u">M__</span>012</div>
<div class="c r" style="left:587px;top:38px;width:141px;background:#ff0000;color:#fff">20.7 (23.4) / 11163</div>
<div class="c r" style="left:728px;top:38px;width:159px;background:#0000ff;color:#fff">14.82 / 11100</div>
<div class="c l" style="left:887px;top:38px;width:40px;background:#fff;color:#000;padding-left:6px">0</div>
<div class="c l" style="left:927px;top:38px;width:67px;background:#fff;color:#000">N</div>
<div class="c r" style="left:994px;top:38px;width:112px;background:#c0c0ff;color:#000">1421</div>
<div class="c r" style="left:1106px;top:38px;width:110px;background:#c0c0ff;color:#000">13794 / 13547</div>
<div class="c l" style="left:1216px;top:38px;width:40px;background:#c0c0ff;color:#000;padding-left:6px">9.5271</div>
<div class="c l" style="left:1256px;top:38px;width:40px;background:#fff;color:#000;padding-left:6px">9.59</div>
<div class="c r" style="left:1296px;top:38px;width:79px;background:#fff;color:#000">0.000</div>
<div class="c r" style="left:1375px;top:38px;width:99px;background:#fff;color:#000">0</div>
<div class="c l" style="left:1474px;top:38px;width:117px;background:#c0c0ff;color:#000;padding-left:6px">40</div>
<div class="c" style="left:1591px;top:38px;width:63px;background:#c0c0ff;color:#000"><div class="cl"><span class="d">21-<span class="u2">NOV</span>-2019</span></div></div>
<div class="c l" style="left:1654px;top:38px;width:22px;background:#fff;color:#000"></div>
<div class="c" style="left:0px;top:57px;width:33px;background:#c0c0ff;color:#000"><div class="ck"><svg width="16" height="16" viewBox="0 0 16 16"><path d="M0.8 8.4 C2.6 6.6 4.2 7.2 5.4 9.8 C7 6 10 2.4 15.6 0 C11.4 3.6 8.4 8 6.6 14 L4.8 14 C4 11.4 2.8 9.6 0.8 8.4 Z" fill="#1818b0"/></svg></div></div>
<div class="c l" style="left:33px;top:57px;width:554px;background:#fff;color:#000"><span class="u">SIMSON_MODEL_KS</span> <span class="u">TUNING</span> 85<span class="u">M__</span>011 F1</div>
<div class="c r" style="left:587px;top:57px;width:141px;background:#ff0000;color:#fff">20.9 (23.8) / 11047</div>
<div class="c r" style="left:728px;top:57px;width:159px;background:#0000ff;color:#fff">15.28 / 10748</div>
<div class="c l" style="left:887px;top:57px;width:40px;background:#fff;color:#000;padding-left:6px">0</div>
<div class="c l" style="left:927px;top:57px;width:67px;background:#fff;color:#000">N</div>
<div class="c r" style="left:994px;top:57px;width:112px;background:#c0c0ff;color:#000">1383</div>
<div class="c r" style="left:1106px;top:57px;width:110px;background:#c0c0ff;color:#000">13364 / 13229</div>
<div class="c l" style="left:1216px;top:57px;width:40px;background:#c0c0ff;color:#000;padding-left:6px">9.5493</div>
<div class="c l" style="left:1256px;top:57px;width:40px;background:#fff;color:#000;padding-left:6px">9.63</div>
<div class="c r" style="left:1296px;top:57px;width:79px;background:#fff;color:#000">0.000</div>
<div class="c r" style="left:1375px;top:57px;width:99px;background:#fff;color:#000">0</div>
<div class="c l" style="left:1474px;top:57px;width:117px;background:#c0c0ff;color:#000;padding-left:6px">40</div>
<div class="c" style="left:1591px;top:57px;width:63px;background:#c0c0ff;color:#000"><div class="cl"><span class="d">21-<span class="u2">NOV</span>-2019</span></div></div>
<div class="c l" style="left:1654px;top:57px;width:22px;background:#fff;color:#000"></div>
<div class="c" style="left:0px;top:76px;width:33px;background:#c0c0ff;color:#000"></div>
<div class="c l" style="left:33px;top:76px;width:554px;background:#fff;color:#000"><span class="u">SIMSON_MODEL_KS</span> <span class="u">TUNING</span> 85<span class="u">M__</span>010 <span class="u">LTM</span> <span class="u">NACHBAU</span></div>
<div class="c r" style="left:587px;top:76px;width:141px;background:#ff0000;color:#fff">15.6 (17.9) / 9177</div>
<div class="c r" style="left:728px;top:76px;width:159px;background:#0000ff;color:#fff">13.78 / 8977</div>
<div class="c l" style="left:887px;top:76px;width:40px;background:#fff;color:#000;padding-left:6px">0</div>
<div class="c l" style="left:927px;top:76px;width:67px;background:#fff;color:#000">N</div>
<div class="c r" style="left:994px;top:76px;width:112px;background:#c0c0ff;color:#000">1198</div>
<div class="c r" style="left:1106px;top:76px;width:110px;background:#c0c0ff;color:#000">11443 / 11508</div>
<div class="c l" style="left:1216px;top:76px;width:40px;background:#c0c0ff;color:#000;padding-left:6px">9.5634</div>
<div class="c l" style="left:1256px;top:76px;width:40px;background:#fff;color:#000;padding-left:6px">9.47</div>
<div class="c r" style="left:1296px;top:76px;width:79px;background:#fff;color:#000">0.000</div>
<div class="c r" style="left:1375px;top:76px;width:99px;background:#fff;color:#000">0</div>
<div class="c l" style="left:1474px;top:76px;width:117px;background:#c0c0ff;color:#000;padding-left:6px">40</div>
<div class="c" style="left:1591px;top:76px;width:63px;background:#c0c0ff;color:#000"><div class="cl"><span class="d">21-<span class="u2">NOV</span>-2019</span></div></div>
<div class="c l" style="left:1654px;top:76px;width:22px;background:#fff;color:#000"></div>
<div class="c" style="left:0px;top:95px;width:33px;background:#c0c0ff;color:#000"></div>
<div class="c l" style="left:33px;top:95px;width:554px;background:#fff;color:#000"><span class="u">SIMSON_MODEL_KS</span> <span class="u">TUNING</span> 85<span class="u">M__</span>009 <span class="u">LTM</span> <span class="u">NACHBAU</span></div>
<div class="c r" style="left:587px;top:95px;width:141px;background:#ff0000;color:#fff">15.7 (18.1) / 8938</div>
<div class="c r" style="left:728px;top:95px;width:159px;background:#0000ff;color:#fff">14.29 / 8821</div>
<div class="c l" style="left:887px;top:95px;width:40px;background:#fff;color:#000;padding-left:6px">0</div>
<div class="c l" style="left:927px;top:95px;width:67px;background:#fff;color:#000">N</div>
<div class="c r" style="left:994px;top:95px;width:112px;background:#c0c0ff;color:#000">1194</div>
<div class="c r" style="left:1106px;top:95px;width:110px;background:#c0c0ff;color:#000">11325 / 11447</div>
<div class="c l" style="left:1216px;top:95px;width:40px;background:#c0c0ff;color:#000;padding-left:6px">9.5694</div>
<div class="c l" style="left:1256px;top:95px;width:40px;background:#fff;color:#000;padding-left:6px">9.48</div>
<div class="c r" style="left:1296px;top:95px;width:79px;background:#fff;color:#000">0.000</div>
<div class="c r" style="left:1375px;top:95px;width:99px;background:#fff;color:#000">0</div>
<div class="c l" style="left:1474px;top:95px;width:117px;background:#c0c0ff;color:#000;padding-left:6px">40</div>
<div class="c" style="left:1591px;top:95px;width:63px;background:#c0c0ff;color:#000"><div class="cl"><span class="d">21-<span class="u2">NOV</span>-2019</span></div></div>
<div class="c l" style="left:1654px;top:95px;width:22px;background:#fff;color:#000"></div>
<div class="c" style="left:0px;top:114px;width:33px;background:#c0c0ff;color:#000"></div>
<div class="c l" style="left:33px;top:114px;width:554px;background:#fff;color:#000"><span class="u">SIMSON_MODEL_KS</span> <span class="u">TUNING</span> 85<span class="u">M__</span>008 <span class="u">JACKMOTORS</span> <span class="u">LTM</span></div>
<div class="c r" style="left:587px;top:114px;width:141px;background:#ff0000;color:#fff">18.7 (21.2) / 10381</div>
<div class="c r" style="left:728px;top:114px;width:159px;background:#0000ff;color:#fff">14.53 / 10183</div>
<div class="c l" style="left:887px;top:114px;width:40px;background:#fff;color:#000;padding-left:6px">0</div>
<div class="c l" style="left:927px;top:114px;width:67px;background:#fff;color:#000">N</div>
<div class="c r" style="left:994px;top:114px;width:112px;background:#c0c0ff;color:#000">1391</div>
<div class="c r" style="left:1106px;top:114px;width:110px;background:#c0c0ff;color:#000">13162 / 13288</div>
<div class="c l" style="left:1216px;top:114px;width:40px;background:#c0c0ff;color:#000;padding-left:6px">9.5243</div>
<div class="c l" style="left:1256px;top:114px;width:40px;background:#fff;color:#000;padding-left:6px">9.44</div>
<div class="c r" style="left:1296px;top:114px;width:79px;background:#fff;color:#000">0.000</div>
<div class="c r" style="left:1375px;top:114px;width:99px;background:#fff;color:#000">0</div>
<div class="c l" style="left:1474px;top:114px;width:117px;background:#c0c0ff;color:#000;padding-left:6px">40</div>
<div class="c" style="left:1591px;top:114px;width:63px;background:#c0c0ff;color:#000"><div class="cl"><span class="d">21-<span class="u2">NOV</span>-2019</span></div></div>
<div class="c l" style="left:1654px;top:114px;width:22px;background:#fff;color:#000"></div>
<div class="c" style="left:0px;top:133px;width:33px;background:#c0c0ff;color:#000"></div>
<div class="c l" style="left:33px;top:133px;width:554px;background:#fff;color:#000"><span class="u">SIMSON_MODEL_KS</span> <span class="u">TUNING</span> 85<span class="u">M__</span>007</div>
<div class="c r" style="left:587px;top:133px;width:141px;background:#ff0000;color:#fff">18.9 (21.6) / 10218</div>
<div class="c r" style="left:728px;top:133px;width:159px;background:#0000ff;color:#fff">14.91 / 9984</div>
<div class="c l" style="left:887px;top:133px;width:40px;background:#fff;color:#000;padding-left:6px">0</div>
<div class="c l" style="left:927px;top:133px;width:67px;background:#fff;color:#000">N</div>
<div class="c r" style="left:994px;top:133px;width:112px;background:#c0c0ff;color:#000">1366</div>
<div class="c r" style="left:1106px;top:133px;width:110px;background:#c0c0ff;color:#000">12983 / 13063</div>
<div class="c l" style="left:1216px;top:133px;width:40px;background:#c0c0ff;color:#000;padding-left:6px">9.5533</div>
<div class="c l" style="left:1256px;top:133px;width:40px;background:#fff;color:#000;padding-left:6px">9.46</div>
<div class="c r" style="left:1296px;top:133px;width:79px;background:#fff;color:#000">0.000</div>
<div class="c r" style="left:1375px;top:133px;width:99px;background:#fff;color:#000">0</div>
<div class="c l" style="left:1474px;top:133px;width:117px;background:#c0c0ff;color:#000;padding-left:6px">40</div>
<div class="c" style="left:1591px;top:133px;width:63px;background:#c0c0ff;color:#000"><div class="cl"><span class="d">21-<span class="u2">NOV</span>-2019</span></div></div>
<div class="c l" style="left:1654px;top:133px;width:22px;background:#fff;color:#000"></div>
<div class="c" style="left:0px;top:152px;width:33px;background:#c0c0ff;color:#000"></div>
<div class="c l" style="left:33px;top:152px;width:554px;background:#fff;color:#000"><span class="u">SIMSON_MODEL_KS</span> <span class="u">TUNING</span> 85<span class="u">M__</span>006 <span class="u">JACKMOTORS</span> <span class="u">LTM</span></div>
<div class="c r" style="left:587px;top:152px;width:141px;background:#ff0000;color:#fff">18.6 (21.1) / 9955</div>
<div class="c r" style="left:728px;top:152px;width:159px;background:#0000ff;color:#fff">15.05 / 9716</div>
<div class="c l" style="left:887px;top:152px;width:40px;background:#fff;color:#000;padding-left:6px">0</div>
<div class="c l" style="left:927px;top:152px;width:67px;background:#fff;color:#000">N</div>
<div class="c r" style="left:994px;top:152px;width:112px;background:#c0c0ff;color:#000">1349</div>
<div class="c r" style="left:1106px;top:152px;width:110px;background:#c0c0ff;color:#000">12906 / 12878</div>
<div class="c l" style="left:1216px;top:152px;width:40px;background:#c0c0ff;color:#000;padding-left:6px">9.5781</div>
<div class="c l" style="left:1256px;top:152px;width:40px;background:#fff;color:#000;padding-left:6px">9.51</div>
<div class="c r" style="left:1296px;top:152px;width:79px;background:#fff;color:#000">0.000</div>
<div class="c r" style="left:1375px;top:152px;width:99px;background:#fff;color:#000">0</div>
<div class="c l" style="left:1474px;top:152px;width:117px;background:#c0c0ff;color:#000;padding-left:6px">40</div>
<div class="c" style="left:1591px;top:152px;width:63px;background:#c0c0ff;color:#000"><div class="cl"><span class="d">21-<span class="u2">NOV</span>-2019</span></div></div>
<div class="c l" style="left:1654px;top:152px;width:22px;background:#fff;color:#000"></div>
<div class="c" style="left:0px;top:171px;width:33px;background:#c0c0ff;color:#000"></div>
<div class="c l" style="left:33px;top:171px;width:554px;background:#fff;color:#000"><span class="u">SIMSON_MODEL_KS</span> <span class="u">TUNING</span> 85<span class="u">M__</span>005</div>
<div class="c r" style="left:587px;top:171px;width:141px;background:#ff0000;color:#fff">20.1 (23.1) / 11636</div>
<div class="c r" style="left:728px;top:171px;width:159px;background:#0000ff;color:#fff">14.05 / 11341</div>
<div class="c l" style="left:887px;top:171px;width:40px;background:#fff;color:#000;padding-left:6px">0</div>
<div class="c l" style="left:927px;top:171px;width:67px;background:#fff;color:#000">N</div>
<div class="c r" style="left:994px;top:171px;width:112px;background:#c0c0ff;color:#000">1509</div>
<div class="c r" style="left:1106px;top:171px;width:110px;background:#c0c0ff;color:#000">14066 / 14403</div>
<div class="c l" style="left:1216px;top:171px;width:40px;background:#c0c0ff;color:#000;padding-left:6px">9.4985</div>
<div class="c l" style="left:1256px;top:171px;width:40px;background:#fff;color:#000;padding-left:6px">9.57</div>
<div class="c r" style="left:1296px;top:171px;width:79px;background:#fff;color:#000">0.000</div>
<div class="c r" style="left:1375px;top:171px;width:99px;background:#fff;color:#000">0</div>
<div class="c l" style="left:1474px;top:171px;width:117px;background:#c0c0ff;color:#000;padding-left:6px">40</div>
<div class="c" style="left:1591px;top:171px;width:63px;background:#c0c0ff;color:#000"><div class="cl"><span class="d">21-<span class="u2">NOV</span>-2019</span></div></div>
<div class="c l" style="left:1654px;top:171px;width:22px;background:#fff;color:#000"></div>
<div class="c" style="left:0px;top:190px;width:33px;background:#c0c0ff;color:#000"><div class="ck"><svg width="16" height="16" viewBox="0 0 16 16"><path d="M0.8 8.4 C2.6 6.6 4.2 7.2 5.4 9.8 C7 6 10 2.4 15.6 0 C11.4 3.6 8.4 8 6.6 14 L4.8 14 C4 11.4 2.8 9.6 0.8 8.4 Z" fill="#1818b0"/></svg></div></div>
<div class="c l" style="left:33px;top:190px;width:554px;background:#fff;color:#000"><span class="u">SIMSON_MODEL_KS</span> <span class="u">TUNING</span> 85<span class="u">M__</span>004</div>
<div class="c r" style="left:587px;top:190px;width:141px;background:#ff0000;color:#fff">19.9 (23.2) / 11529</div>
<div class="c r" style="left:728px;top:190px;width:159px;background:#0000ff;color:#fff">14.20 / 11262</div>
<div class="c l" style="left:887px;top:190px;width:40px;background:#fff;color:#000;padding-left:6px">0</div>
<div class="c l" style="left:927px;top:190px;width:67px;background:#fff;color:#000">N</div>
<div class="c r" style="left:994px;top:190px;width:112px;background:#c0c0ff;color:#000">1488</div>
<div class="c r" style="left:1106px;top:190px;width:110px;background:#c0c0ff;color:#000">13940 / 14219</div>
<div class="c l" style="left:1216px;top:190px;width:40px;background:#c0c0ff;color:#000;padding-left:6px">9.5215</div>
<div class="c l" style="left:1256px;top:190px;width:40px;background:#fff;color:#000;padding-left:6px">9.59</div>
<div class="c r" style="left:1296px;top:190px;width:79px;background:#fff;color:#000">0.000</div>
<div class="c r" style="left:1375px;top:190px;width:99px;background:#fff;color:#000">0</div>
<div class="c l" style="left:1474px;top:190px;width:117px;background:#c0c0ff;color:#000;padding-left:6px">40</div>
<div class="c" style="left:1591px;top:190px;width:63px;background:#c0c0ff;color:#000"><div class="cl"><span class="d">21-<span class="u2">NOV</span>-2019</span></div></div>
<div class="c l" style="left:1654px;top:190px;width:22px;background:#fff;color:#000"></div>
<div class="c" style="left:0px;top:209px;width:33px;background:#c0c0ff;color:#000"></div>
<div class="c l" style="left:33px;top:209px;width:554px;background:#fff;color:#000"><span class="u">SIMSON_MODEL_KS</span> <span class="u">TUNING</span> 85<span class="u">M__</span>003</div>
<div class="c r" style="left:587px;top:209px;width:141px;background:#ff0000;color:#fff">19.1 (22.7) / 11565</div>
<div class="c r" style="left:728px;top:209px;width:159px;background:#0000ff;color:#fff">13.87 / 11252</div>
<div class="c l" style="left:887px;top:209px;width:40px;background:#fff;color:#000;padding-left:6px">0</div>
<div class="c l" style="left:927px;top:209px;width:67px;background:#fff;color:#000">N</div>
<div class="c r" style="left:994px;top:209px;width:112px;background:#c0c0ff;color:#000">1450</div>
<div class="c r" style="left:1106px;top:209px;width:110px;background:#c0c0ff;color:#000">13628 / 13869</div>
<div class="c l" style="left:1216px;top:209px;width:40px;background:#c0c0ff;color:#000;padding-left:6px">9.5223</div>
<div class="c l" style="left:1256px;top:209px;width:40px;background:#fff;color:#000;padding-left:6px">9.6</div>
<div class="c r" style="left:1296px;top:209px;width:79px;background:#fff;color:#000">0.000</div>
<div class="c r" style="left:1375px;top:209px;width:99px;background:#fff;color:#000">0</div>
<div class="c l" style="left:1474px;top:209px;width:117px;background:#c0c0ff;color:#000;padding-left:6px">40</div>
<div class="c" style="left:1591px;top:209px;width:63px;background:#c0c0ff;color:#000"><div class="cl"><span class="d">21-<span class="u2">NOV</span>-2019</span></div></div>
<div class="c l" style="left:1654px;top:209px;width:22px;background:#fff;color:#000"></div>
<div class="c" style="left:0px;top:228px;width:33px;background:#c0c0ff;color:#000"></div>
<div class="c l" style="left:33px;top:228px;width:554px;background:#fff;color:#000"><span class="u">SIMSON_KS</span>85_2<span class="u">_SOPHIE__</span>010</div>
<div class="c r" style="left:587px;top:228px;width:141px;background:#ff0000;color:#fff">12.8 (15.0) / 9571</div>
<div class="c r" style="left:728px;top:228px;width:159px;background:#0000ff;color:#fff">11.39 / 8824</div>
<div class="c l" style="left:887px;top:228px;width:40px;background:#fff;color:#000;padding-left:6px">0</div>
<div class="c l" style="left:927px;top:228px;width:67px;background:#fff;color:#000">N</div>
<div class="c r" style="left:994px;top:228px;width:112px;background:#c0c0ff;color:#000">1222</div>
<div class="c r" style="left:1106px;top:228px;width:110px;background:#c0c0ff;color:#000">10797 / 10947</div>
<div class="c l" style="left:1216px;top:228px;width:40px;background:#c0c0ff;color:#000;padding-left:6px">8.9405</div>
<div class="c l" style="left:1256px;top:228px;width:40px;background:#fff;color:#000;padding-left:6px">8.99</div>
<div class="c r" style="left:1296px;top:228px;width:79px;background:#fff;color:#000">0.000</div>
<div class="c r" style="left:1375px;top:228px;width:99px;background:#fff;color:#000">0</div>
<div class="c l" style="left:1474px;top:228px;width:117px;background:#c0c0ff;color:#000;padding-left:6px">40</div>
<div class="c" style="left:1591px;top:228px;width:63px;background:#c0c0ff;color:#000"><div class="cl"><span class="d">21-<span class="u2">NOV</span>-2019</span></div></div>
<div class="c l" style="left:1654px;top:228px;width:22px;background:#fff;color:#000"></div>
</div>
<div id="gvs"><div class="b" style="top:0"><svg width="16" height="17"><path d="M4 10 L8 6 L12 10 Z" fill="#000"/></svg></div><div class="b" style="top:114px;height:17px"></div><div class="b" style="top:220px"><svg width="16" height="17"><path d="M4 7 L8 11 L12 7 Z" fill="#000"/></svg></div></div>
<div id="ghs"><div class="b" style="left:0"><svg width="17" height="16"><path d="M9.5 4 L5.5 8 L9.5 12 Z" fill="#000"/></svg></div><div class="b" style="left:17px;width:17px"></div><div class="b" style="left:1658px"><svg width="17" height="16"><path d="M7 4 L11 8 L7 12 Z" fill="#000"/></svg></div></div>
<div id="vsplit"></div><div id="hsplit"></div>
<div id="tabline"></div>
<div class="tab" style="left:6px;top:358px;width:68px;height:18px;line-height:16px">Kurven Zeit</div>
<div class="tab" style="left:74px;top:358px;width:72px;height:18px;line-height:16px;border-right:1px solid #e0e0e0">Kurven Km/h</div>
<div class="tab" style="left:146px;top:356px;width:96px;height:22px;line-height:17px;padding-left:7px">Kurven Drehzahl</div>
<div style="position:absolute;left:1915px;top:376px;width:2px;height:6px;background:#696969"></div>
<div style="position:absolute;left:3px;top:1058px;width:219px;height:2px;background:linear-gradient(#d0d0d0,#808080)"></div>
<div style="position:absolute;left:224px;top:1058px;width:38px;height:1px;background:#909090"></div>
<div style="position:absolute;left:266px;top:1058px;width:46px;height:1px;background:#909090"></div>
<div style="position:absolute;left:318px;top:1058px;width:28px;height:1px;background:#909090"></div>
<div style="position:absolute;left:352px;top:1058px;width:34px;height:1px;background:#909090"></div>
<div style="position:absolute;left:392px;top:1058px;width:32px;height:1px;background:#909090"></div>
<div style="position:absolute;left:430px;top:1058px;width:38px;height:1px;background:#909090"></div>
<div style="position:absolute;left:474px;top:1058px;width:66px;height:1px;background:#909090"></div>
<div style="position:absolute;left:546px;top:1058px;width:66px;height:1px;background:#909090"></div>
<div style="position:absolute;left:618px;top:1058px;width:32px;height:1px;background:#909090"></div>
<div style="position:absolute;left:656px;top:1058px;width:32px;height:1px;background:#909090"></div>
<div style="position:absolute;left:694px;top:1058px;width:32px;height:1px;background:#909090"></div>
<div style="position:absolute;left:732px;top:1058px;width:32px;height:1px;background:#909090"></div>
<div style="position:absolute;left:770px;top:1058px;width:34px;height:1px;background:#909090"></div>
<div id="status">
<div class="p" style="left:1px;width:132px">34 Leistungsmessungen</div>
<div class="p" style="left:136px;width:132px"><span class="u">SIMSON_MODEL_KS</span> <span class="u">TUNING</span> 85<span class="u">M__</span>004</div>
<div class="p" style="left:270px;width:199px">HP1 Front1= 0.0 PS  [319:5,38]</div>
<div class="p" style="left:471px;width:80px">RPM= 13588.2</div>
<div class="p" style="left:552px;width:1011px"></div>
<div class="p" style="left:1566px;width:166px"><span style="padding-left:20px">getrennt</span></div>
<div class="p" style="left:1734px;width:94px">Leerelauf</div>
<svg class="i" style="left:1568px;width:17px" width="17" height="15" viewBox="0 0 17 15"><rect width="17" height="15" fill="#f00"/><path d="M0 15 L6 9 M11 4 L16 0" stroke="#404040" stroke-width="1.6"/><path d="M5 6 L9 11 M8 4 L12 9" stroke="#e8e8e8" stroke-width="2.2" stroke-linecap="round"/><path d="M5 6 L9 11 M8 4 L12 9" stroke="#606060" stroke-width="0.7" fill="none"/></svg>
<svg class="i" style="left:1831px;width:20px" width="20" height="15" viewBox="0 0 20 15"><rect width="20" height="15" fill="#f00"/><rect x="8" y="1" width="3" height="9" fill="#d8d8d8" stroke="#202020" stroke-width=".8"/><circle cx="9.5" cy="11.5" r="3" fill="#1030ff" stroke="#101060" stroke-width=".8"/></svg>
<svg class="i" style="left:1855px;width:20px" width="20" height="15" viewBox="0 0 20 15"><rect width="20" height="15" fill="#f00"/><text x="10" y="13" text-anchor="middle" font-family="Liberation Sans" font-weight="bold" font-size="13" fill="#200000" textLength="16" lengthAdjust="spacingAndGlyphs">OBD</text></svg>
<svg class="i" style="left:1879px;width:20px" width="20" height="15" viewBox="0 0 20 15"><rect width="20" height="15" fill="#f00"/><text x="10" y="13" text-anchor="middle" font-family="Liberation Sans" font-weight="bold" font-size="12" fill="#200000" textLength="17" lengthAdjust="spacingAndGlyphs">xDS</text></svg>
</div>
</body>
</html>
